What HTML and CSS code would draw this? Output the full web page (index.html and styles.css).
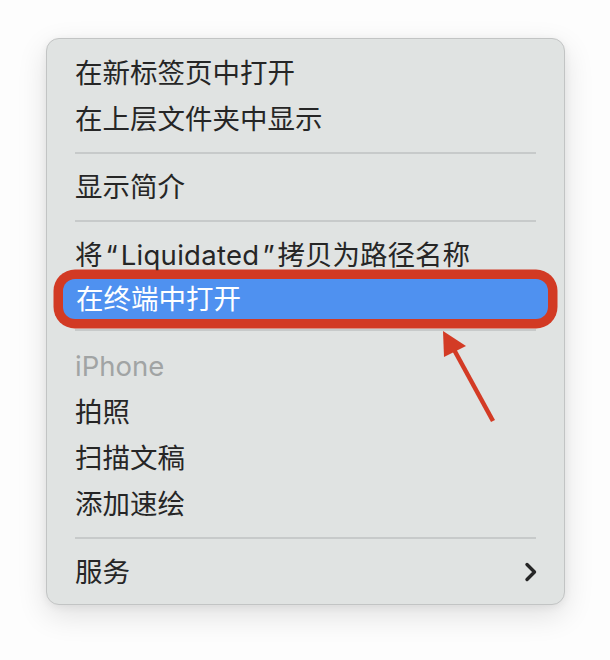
FILE: index.html
```html
<!DOCTYPE html>
<html lang="zh-CN">
<head>
<meta charset="utf-8">
<link rel="stylesheet" href="styles.css">
</head>
<body>
<div class="stage">
  <div class="menu">
    <div class="item">在新标签页中打开</div>
    <div class="item">在上层文件夹中显示</div>
    <div class="sep"></div>
    <div class="item">显示简介</div>
    <div class="sep"></div>
    <div class="item">将<span class="q">“</span><span class="lat">Liquidated</span><span class="q">”</span>拷贝为路径名称</div>
    <div class="item hl">在终端中打开</div>
    <div class="sep"></div>
    <div class="item muted">iPhone</div>
    <div class="item">拍照</div>
    <div class="item">扫描文稿</div>
    <div class="item">添加速绘</div>
    <div class="sep"></div>
    <div class="item sub">服务
      <svg class="chev" width="14" height="20" viewBox="0 0 14 20"><path d="M3 2.5 L10.5 10 L3 17.5" fill="none" stroke="#262626" stroke-width="3.4" stroke-linecap="round" stroke-linejoin="round"/></svg>
    </div>
  </div>
  <svg class="arrow" width="610" height="660" viewBox="0 0 610 660">
    <line x1="493" y1="421" x2="452" y2="346" stroke="#d33b25" stroke-width="4.5" stroke-linecap="butt"/>
    <polygon points="443,331 444,357 466,346" fill="#d33b25"/>
  </svg>
</div>
</body>
</html>
```
FILE: styles.css
```css
html, body {
  margin: 0;
  padding: 0;
  background: #fdfdfd;
}
.stage {
  position: relative;
  width: 610px;
  height: 660px;
  padding: 38px 0 0 46px;
  box-sizing: border-box;
}
.menu {
  width: 519px;
  box-sizing: border-box;
  background: #e0e3e2;
  border: 1px solid #c2c4c4;
  border-radius: 13px;
  box-shadow: 0 10px 30px rgba(0,0,0,0.12), 0 2px 8px rgba(0,0,0,0.06);
  padding: 11px 0 9px;
  font-family: "Inter", "Noto Sans CJK SC", "Noto Sans", sans-serif;
  font-size: 27.5px;
  color: #262626;
}
.item {
  height: 46px;
  display: flex;
  align-items: center;
  padding: 0 28px;
  line-height: 46px;
  white-space: nowrap;
}
.q {
  padding: 0 3px;
}
.lat {
  letter-spacing: 0.3px;
}
.item.hl {
  height: 40px;
  margin: 1px 16px 7px 16px;
  padding: 0 13px;
  background: #4f91f0;
  color: #ffffff;
  border-radius: 12px;
  box-shadow: 0 0 0 9.5px #d23a24;
}
.item.muted {
  color: #a1a4a4;
}
.item.sub {
  justify-content: space-between;
}
.chev {
  margin-right: -2px;
}
.sep {
  height: 2px;
  background: #c7caca;
  margin: 10px 28px 10px 28px;
}
.hl + .sep {
  margin-bottom: 12px;
}
.arrow {
  position: absolute;
  left: 0;
  top: 0;
  pointer-events: none;
}
```
